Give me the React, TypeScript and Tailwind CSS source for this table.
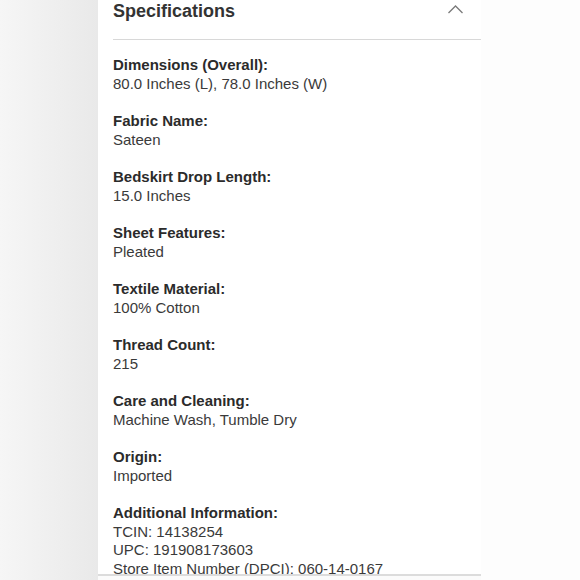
const specs: { label: string; values: string[] }[] = [
  { label: "Dimensions (Overall):", values: ["80.0 Inches (L), 78.0 Inches (W)"] },
  { label: "Fabric Name:", values: ["Sateen"] },
  { label: "Bedskirt Drop Length:", values: ["15.0 Inches"] },
  { label: "Sheet Features:", values: ["Pleated"] },
  { label: "Textile Material:", values: ["100% Cotton"] },
  { label: "Thread Count:", values: ["215"] },
  { label: "Care and Cleaning:", values: ["Machine Wash, Tumble Dry"] },
  { label: "Origin:", values: ["Imported"] },
  {
    label: "Additional Information:",
    values: ["TCIN: 14138254", "UPC: 191908173603", "Store Item Number (DPCI): 060-14-0167"],
  },
];

export default function App() {
  return (
    <div
      className="w-[580px] h-[580px] flex overflow-hidden text-[#333]"
      style={{ fontFamily: '"Liberation Sans", Arial, sans-serif' }}
    >
      <div className="w-[98px] h-full bg-gradient-to-r from-[#f6f6f6] to-[#e9e9e9]" />

      <div className="w-[383px] h-full flex flex-col bg-[#fbfbfb]">
        <div className="h-[574px] bg-white overflow-hidden">
          <div className="ml-[15px] h-[40px] border-b border-[#d8d8d8] flex items-start justify-between pr-[18px]">
            <h2 className="text-[18px] leading-[22px] font-bold text-[#333]">Specifications</h2>
            <svg width="15" height="9" viewBox="0 0 15 9" className="mt-[5px]" fill="none">
              <polyline points="0.5,8 7.5,1 14.5,8" stroke="#7a7a7a" strokeWidth="1.3" />
            </svg>
          </div>

          <div className="pl-[15px] pt-[16px] flex flex-col gap-[19px]">
            {specs.map((s) => (
              <div key={s.label} className="text-[15px] leading-[18.5px]">
                <div className="font-bold text-[#2b2b2b]">{s.label}</div>
                {s.values.map((v) => (
                  <div key={v} className="text-[#3a3a3a]">{v}</div>
                ))}
              </div>
            ))}
          </div>
        </div>
        <div className="h-[2px] bg-[#dcdcdc]" />
      </div>

      <div className="flex-1 h-full bg-[#fdfdfd]" />
    </div>
  );
}
